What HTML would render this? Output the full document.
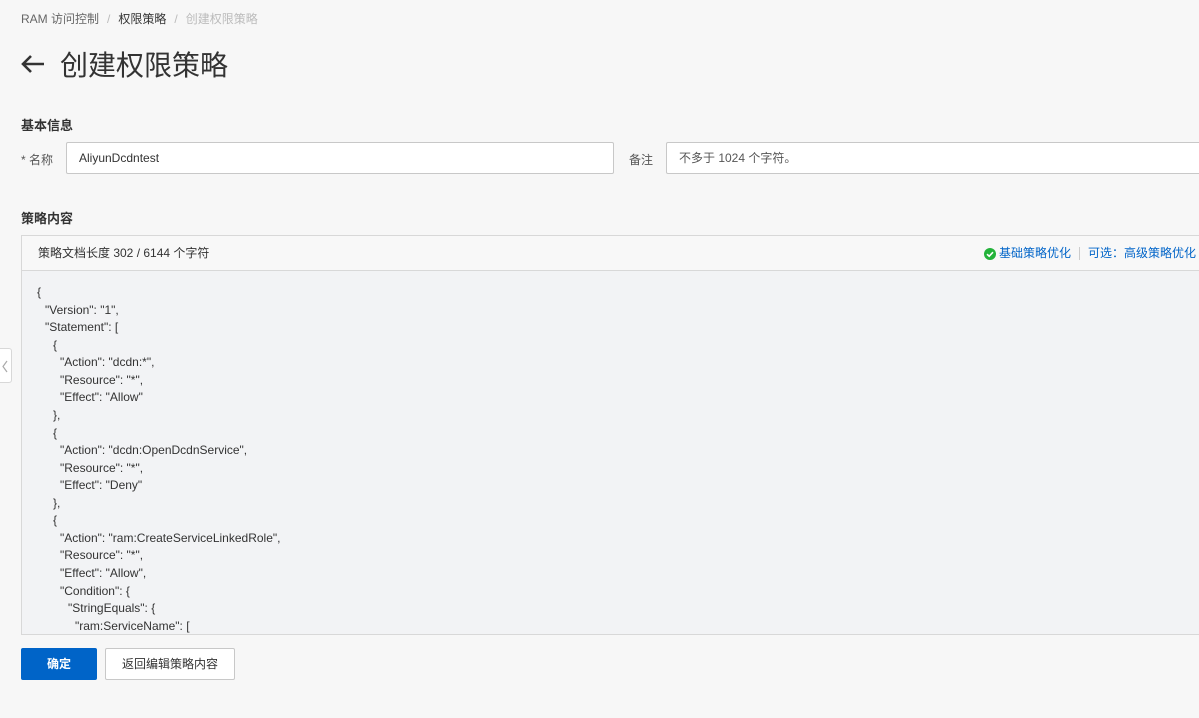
<!DOCTYPE html>
<html><head><meta charset="utf-8"><style>
*{box-sizing:border-box;margin:0;padding:0}
body{width:1199px;height:718px;overflow:hidden;background:#f7f7f7;font-family:"Liberation Sans","Noto Sans CJK SC",sans-serif;color:#333;position:relative}
.a{position:absolute}
.bc{top:10px;left:21px;font-size:12px;color:#666}
.bc span{margin:0 8px;color:#bbb}
.title{top:44px;left:20px;font-size:28px;color:#333;display:flex;align-items:center}
.h{font-size:13px;font-weight:bold;color:#333}
.inp{height:32px;border:1px solid #c8c8c8;border-radius:2px;background:#fff;font-size:12px;padding-left:12px;line-height:30px}
.box{left:21px;top:235px;width:1190px;height:400px;border:1px solid #d8d8d8;background:#f2f3f5}
.bh{height:35px;background:#f8f8f8;border-bottom:1px solid #d8d8d8;font-size:12px;line-height:35px;padding-left:16px;position:relative}
.code{font-size:12px;line-height:17.56px;color:#333;padding-top:13px}
.code div{white-space:pre}
.btn{height:32px;font-size:12px;line-height:30px;text-align:center;border-radius:2px}
</style></head><body>
<div class="a bc">RAM 访问控制<span>/</span><span style="margin:0;color:#333">权限策略</span><span>/</span><span style="margin:0;color:#bbb">创建权限策略</span></div>
<div class="a title"><svg width="26" height="22" viewBox="0 0 26 22"><path d="M24 11H3M11 3L3 11L11 19" stroke="#333" stroke-width="2.6" fill="none"/></svg><span style="margin-left:14px">创建权限策略</span></div>
<div class="a h" style="top:115px;left:21px">基本信息</div>
<div class="a" style="top:151px;left:21px;font-size:12px;color:#555">* 名称</div>
<div class="a inp" style="top:142px;left:66px;width:548px">AliyunDcdntest</div>
<div class="a" style="top:151px;left:629px;font-size:12px;color:#555">备注</div>
<div class="a inp" style="top:142px;left:666px;width:560px;color:#555">不多于 1024 个字符。</div>
<div class="a h" style="top:208px;left:21px">策略内容</div>
<div class="a box">
<div class="bh">策略文档长度 302 / 6144 个字符
<div style="position:absolute;right:14px;top:0;color:#0064c8;display:flex;align-items:center"><svg width="12" height="12" viewBox="0 0 12 12" style="margin-right:3px"><circle cx="6" cy="6" r="6" fill="#23b33a"/><path d="M3 6.2L5.2 8.2L9 4.2" stroke="#fff" stroke-width="1.6" fill="none"/></svg>基础策略优化<span style="display:inline-block;width:1px;height:13px;background:#ccc;margin:0 8px"></span>可选：高级策略优化</div></div>
<div class="code">
<div style="padding-left:15px">{</div>
<div style="padding-left:23px">"Version": "1",</div>
<div style="padding-left:23px">"Statement": [</div>
<div style="padding-left:31px">{</div>
<div style="padding-left:38px">"Action": "dcdn:*",</div>
<div style="padding-left:38px">"Resource": "*",</div>
<div style="padding-left:38px">"Effect": "Allow"</div>
<div style="padding-left:31px">},</div>
<div style="padding-left:31px">{</div>
<div style="padding-left:38px">"Action": "dcdn:OpenDcdnService",</div>
<div style="padding-left:38px">"Resource": "*",</div>
<div style="padding-left:38px">"Effect": "Deny"</div>
<div style="padding-left:31px">},</div>
<div style="padding-left:31px">{</div>
<div style="padding-left:38px">"Action": "ram:CreateServiceLinkedRole",</div>
<div style="padding-left:38px">"Resource": "*",</div>
<div style="padding-left:38px">"Effect": "Allow",</div>
<div style="padding-left:38px">"Condition": {</div>
<div style="padding-left:46px">"StringEquals": {</div>
<div style="padding-left:53px">"ram:ServiceName": [</div>
</div></div>
<div class="a" style="left:-1px;top:348px;width:13px;height:35px;background:#fff;border:1px solid #d8d8d8;border-left:none;border-radius:0 3px 3px 0"><svg width="12" height="35" viewBox="0 0 12 35"><path d="M8 12L4 17.5L8 23" stroke="#aaa" stroke-width="1.2" fill="none"/></svg></div>
<div class="a btn" style="left:21px;top:648px;width:76px;background:#0064c8;color:#fff;font-weight:bold;line-height:32px">确定</div>
<div class="a btn" style="left:105px;top:648px;width:130px;background:#fff;border:1px solid #c8c8c8;color:#333">返回编辑策略内容</div>
</body></html>
